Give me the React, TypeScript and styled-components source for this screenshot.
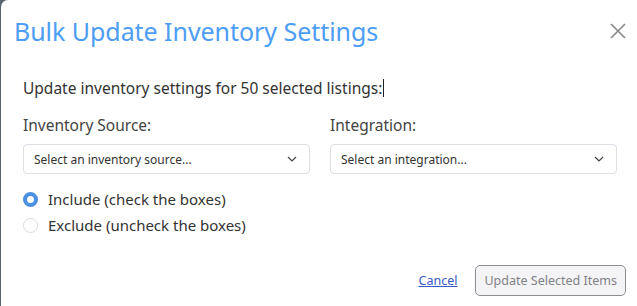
import React from "react";
import styled, { createGlobalStyle } from "styled-components";

const Global = createGlobalStyle`
  html, body { margin: 0; padding: 0; background: #ffffff; }
  body { font-family: "Noto Sans", "Open Sans", sans-serif; color: #333; }
  #root { width: 637px; height: 306px; overflow: hidden; }
`;

const Backdrop = styled.div`
  width: 637px;
  height: 306px;
  background: #5a6470;
  display: flex;
  padding-left: 1px;
  box-sizing: border-box;
`;

const Modal = styled.div`
  flex: 1;
  background: #fff;
  border-top-left-radius: 7px;
  display: flex;
  flex-direction: column;
  padding: 0 11px 0 22px;
`;

const Header = styled.div`
  display: flex;
  align-items: center;
  justify-content: space-between;
  height: 62px;
  margin-left: -9px;
`;

const Title = styled.h2`
  margin: 0;
  font-weight: 400;
  font-size: 25px;
  color: #4d9df4;
  letter-spacing: -0.05px;
`;

const Close = styled.button`
  border: 0;
  background: none;
  padding: 0;
  width: 16px;
  height: 16px;
  margin-right: 0px;
  margin-top: 0px;
  cursor: pointer;
  display: flex;
`;

const Intro = styled.p`
  margin: 15px 0 0 0;
  font-size: 15.5px;
  line-height: 22px;
  color: #333;
  display: flex;
  align-items: center;
`;

const Caret = styled.span`
  display: inline-block;
  width: 1px;
  height: 18px;
  background: #222;
  margin-left: 1px;
`;

const Fields = styled.div`
  display: grid;
  grid-template-columns: 287px 287px;
  column-gap: 20px;
  margin-top: 16px;
`;

const Field = styled.div`
  display: flex;
  flex-direction: column;
`;

const Label = styled.label`
  font-size: 15.5px;
  line-height: 20px;
  color: #444;
  margin-bottom: 9px;
`;

const Select = styled.div`
  height: 30px;
  box-sizing: border-box;
  border: 1px solid #dcdfe4;
  border-radius: 4px;
  display: flex;
  align-items: center;
  justify-content: space-between;
  padding: 0 12px 0 10px;
  font-size: 12px;
  color: #333;
`;

const Radios = styled.div`
  display: flex;
  flex-direction: column;
  gap: 6px;
  margin-top: 15px;
`;

const RadioRow = styled.label`
  display: flex;
  align-items: center;
  gap: 10px;
  font-size: 15px;
  line-height: 20px;
  color: #333;
`;

const RadioDot = styled.span<{ $on?: boolean }>`
  width: 15px;
  height: 15px;
  box-sizing: border-box;
  border-radius: 50%;
  ${(p) =>
    p.$on
      ? `border: 4px solid #4a90e2; background: #fff;`
      : `border: 1px solid #d8dadf; background: #fff;`}
`;

const Footer = styled.div`
  display: flex;
  justify-content: flex-end;
  align-items: center;
  gap: 18px;
  margin-top: auto;
  margin-bottom: 10px;
`;

const CancelLink = styled.a`
  font-size: 12.5px;
  color: #3757c8;
  text-decoration: underline;
`;

const SubmitButton = styled.button`
  height: 31px;
  padding: 0 8px;
  border: 1px solid #8a8c90;
  border-radius: 5px;
  background: #f4f4f6;
  color: #808186;
  font-family: inherit;
  font-size: 12.5px;
`;

const Chevron = () => (
  <svg width="10" height="6" viewBox="0 0 10 6" fill="none">
    <path d="M1 1l4 4 4-4" stroke="#444" strokeWidth="1.2" />
  </svg>
);

export default function App() {
  return (
    <>
      <Global />
      <Backdrop>
        <Modal>
          <Header>
            <Title>Bulk Update Inventory Settings</Title>
            <Close aria-label="Close">
              <svg width="16" height="16" viewBox="0 0 16 16">
                <path d="M1 1l14 14M15 1L1 15" stroke="#8a8a8a" strokeWidth="1.7" />
              </svg>
            </Close>
          </Header>
          <Intro>
            Update inventory settings for 50 selected listings:<Caret />
          </Intro>
          <Fields>
            <Field>
              <Label>Inventory Source:</Label>
              <Select>
                Select an inventory source...
                <Chevron />
              </Select>
            </Field>
            <Field>
              <Label>Integration:</Label>
              <Select>
                Select an integration...
                <Chevron />
              </Select>
            </Field>
          </Fields>
          <Radios>
            <RadioRow>
              <RadioDot $on />
              Include (check the boxes)
            </RadioRow>
            <RadioRow>
              <RadioDot />
              Exclude (uncheck the boxes)
            </RadioRow>
          </Radios>
          <Footer>
            <CancelLink href="#">Cancel</CancelLink>
            <SubmitButton disabled>Update Selected Items</SubmitButton>
          </Footer>
        </Modal>
      </Backdrop>
    </>
  );
}
